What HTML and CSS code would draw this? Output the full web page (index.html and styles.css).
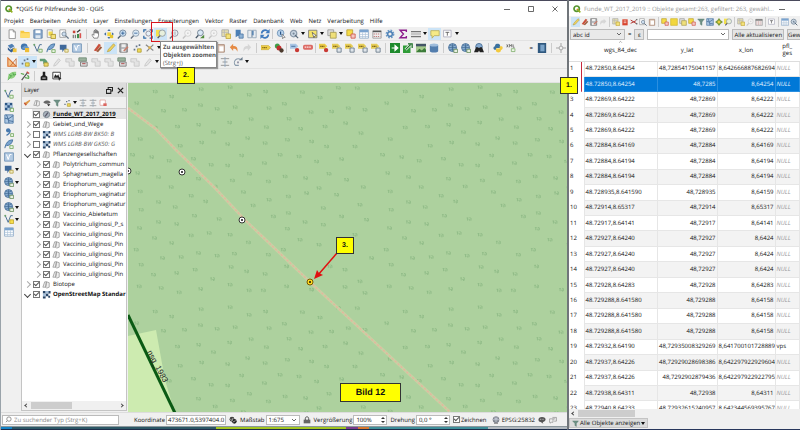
FILE: index.html
```html
<!DOCTYPE html>
<html lang="de">
<head>
<meta charset="utf-8">
<title>QGIS für Pilzfreunde 30 - QGIS</title>
<link rel="stylesheet" href="styles.css">
</head>
<body>
<svg class="defs" aria-hidden="true">
  <symbol id="q" viewBox="0 0 12 12"><circle cx="5.5" cy="5.5" r="4" fill="none" stroke="#589632" stroke-width="2.6"/><path d="M6 6l5 5" stroke="#93b023" stroke-width="2.4"/><path d="M5.5 5.500l2.500.5-2 2z" fill="#ee7913"/></symbol>
  <symbol id="new" viewBox="0 0 12 12"><path d="M2.500 1h5l2.500 2.500v8H2.500z" fill="#fff" stroke="#888"/><path d="M7.500 1v2.500H10" fill="none" stroke="#888"/></symbol>
  <symbol id="open" viewBox="0 0 12 12"><path d="M.5 2h4l1 1.500h6V10.500H.5z" fill="#f5c842"/><path d="M.5 5h11v5.500H.5z" fill="#ffdc6b"/></symbol>
  <symbol id="save" viewBox="0 0 12 12"><path d="M1 1h10v10H1z" fill="#8aa9cc" stroke="#5d7ea6"/><path d="M3 1.500h6v3.500H3z" fill="#fff"/><path d="M3 7.500h6V11H3z" fill="#dce6f0"/></symbol>
  <symbol id="lay" viewBox="0 0 12 12"><path d="M1.500 1h6v9h-6z" fill="#fff" stroke="#999"/><path d="M3 3h5v5H3z" fill="#f1d94d"/><path d="M6 6.500h5.500V11.500H6z" fill="#f6e37a" stroke="#a8922e"/></symbol>
  <symbol id="pages" viewBox="0 0 12 12"><path d="M1 1h7v9H1z" fill="#fff" stroke="#999"/><circle cx="6" cy="6" r="2.500" fill="#cde" stroke="#789"/><path d="M8 8l3.500 3.500" stroke="#678" stroke-width="1.500"/></symbol>
  <symbol id="style" viewBox="0 0 12 12"><path d="M1 2h3v3H1z" fill="#c8453b"/><path d="M6 4l4-3" stroke="#333" stroke-width="1.500"/><path d="M1.500 7v4M4 7v4" stroke="#444"/><path d="M6 6h2.500v5H6z" fill="#3f8f4a"/><path d="M9 5h2v6H9z" fill="#d9534f"/></symbol>
  <symbol id="hand" viewBox="0 0 12 12"><path d="M3.500 11C2 8.500.5 7 1.500 6.500s2 1 2 1V2.500c0-1 1.300-1 1.300 0V5 1.500c0-1 1.400-1 1.400 0V5 2c0-1 1.400-1 1.400 0v3.300V3.500c0-1 1.400-1 1.400 0V8L8 11z" fill="#fff" stroke="#555" stroke-width=".8"/></symbol>
  <symbol id="pan" viewBox="0 0 12 12"><path d="M4 4h4.500v4.500H4z" fill="#f3d53a"/><path d="M6 0l2 2.500H4zM6 12l2-2.500H4zM0 6l2.500-2v4zM12 6L9.500 4v4z" fill="#466f9f"/><path d="M7 7h4v4H7z" fill="#e4c531"/></symbol>
  <symbol id="zin" viewBox="0 0 12 12"><circle cx="7" cy="5" r="3.800" fill="#c9dff2" stroke="#6d8196"/><path d="M4.200 8L1 11.300" stroke="#4b5c6e" stroke-width="1.600"/><path d="M5 5h4M7 3v4" stroke="#2c5b94"/></symbol>
  <symbol id="zout" viewBox="0 0 12 12"><circle cx="7" cy="5" r="3.800" fill="#dceaf5" stroke="#8796a6"/><path d="M4.200 8L1 11.300" stroke="#65717e" stroke-width="1.600"/><path d="M5 5h4" stroke="#2c5b94"/></symbol>
  <symbol id="zfull" viewBox="0 0 12 12"><circle cx="6.500" cy="5.500" r="3" fill="#e6f0f8" stroke="#889"/><path d="M1 4V1h3M8 1h3v3M11 8v3H8M4 11H1V8" fill="none" stroke="#2c6aa8" stroke-width="1.500"/></symbol>
  <symbol id="zsel" viewBox="0 0 12 12"><path d="M0 1h6v8H0z" fill="#f4e04c"/><circle cx="7.500" cy="5" r="3.800" fill="#e8f0dc" stroke="#8b96a0"/><path d="M4.700 8L2 11" stroke="#556" stroke-width="1.600"/></symbol>
  <symbol id="zlay" viewBox="0 0 12 12"><circle cx="7" cy="5" r="3.800" fill="#eef2f5" stroke="#889"/><path d="M4.200 8L1 11.300" stroke="#667" stroke-width="1.600"/><path d="M5.500 3h3v4h-3z" fill="#c5ccd2"/></symbol>
  <symbol id="znat" viewBox="0 0 12 12"><circle cx="7" cy="5" r="3.800" fill="#f3f3f3" stroke="#ccc"/><path d="M4.200 8L1 11.300" stroke="#c4c4c4" stroke-width="1.600"/><path d="M6 5h2" stroke="#bbb"/></symbol>
  <symbol id="zlast" viewBox="0 0 12 12"><circle cx="6.500" cy="4.500" r="3.500" fill="#d9e8f5" stroke="#667788"/><path d="M4 7.500L1 11" stroke="#456" stroke-width="1.600"/><path d="M11 7v4H6z" fill="#4f8a3a"/></symbol>
  <symbol id="nmap" viewBox="0 0 12 12"><path d="M1 1h8v8H1z" fill="#e8e1b0" stroke="#a9a9a9"/><path d="M1 4h8M4 1v8" stroke="#b7b7b7"/><path d="M6 6h5.500v5.500H6z" fill="#f3e27a" stroke="#bfa53c"/></symbol>
  <symbol id="bm" viewBox="0 0 12 12"><path d="M2 1h6v9L5 8l-3 2z" fill="#4b7fb5"/><path d="M6 6h5v5H6z" fill="#8fb3d6" stroke="#4f79a5"/></symbol>
  <symbol id="book" viewBox="0 0 12 12"><path d="M1 1.500h4.500v9H1zM6.500 1.500H11v9H6.500z" fill="#e7ecf1" stroke="#92a3b5"/><path d="M6 2h2v6L7 7 6 8z" fill="#5d87b3"/></symbol>
  <symbol id="ref" viewBox="0 0 12 12"><path d="M2 5.500A4.200 4.200 0 019.500 3M10 6.500A4.200 4.200 0 012.500 9" fill="none" stroke="#3f79bd" stroke-width="2"/><path d="M11.500 0v5h-5zM.5 12V7h5z" fill="#3f79bd"/></symbol>
  <symbol id="ident" viewBox="0 0 12 12"><circle cx="5.500" cy="5" r="4" fill="#b9d3ec" stroke="#6e91b5"/><path d="M5.500 3v4" stroke="#2a5588" stroke-width="1.400"/><path d="M7 6l4 4-2 .2-1 1.500z" fill="#fff" stroke="#555" stroke-width=".7"/></symbol>
  <symbol id="gear" viewBox="0 0 12 12"><circle cx="6" cy="6" r="4.200" fill="none" stroke="#6f9cc8" stroke-width="2.200" stroke-dasharray="2 1.300"/><circle cx="6" cy="6" r="2.800" fill="none" stroke="#4f82b6" stroke-width="1.800"/></symbol>
  <symbol id="act" viewBox="0 0 12 12"><circle cx="5.500" cy="5.500" r="3.800" fill="#cbd7e3" stroke="#8a99a9" stroke-width="1.500"/><circle cx="5.500" cy="5.500" r="1.300" fill="#789"/><path d="M7 7l4 4" stroke="#567" stroke-width="1.400"/></symbol>
  <symbol id="sel" viewBox="0 0 12 12"><path d="M.7 1.500h10v9H.7z" fill="#f5e36a" stroke="#777"/><path d="M5 4l5 4-2 .4-1 2z" fill="#fff" stroke="#444" stroke-width=".8"/></symbol>
  <symbol id="sel2" viewBox="0 0 12 12"><path d="M1 1h7v7H1z" fill="#ddd" stroke="#999"/><path d="M4 4h7v7H4z" fill="#f0e07a" stroke="#a69a50"/></symbol>
  <symbol id="desel" viewBox="0 0 12 12"><path d="M1 1h7v7H1z" fill="#f5dc48" stroke="#baa02c"/><path d="M6 6h5v5H6z" fill="#f4c9c4" stroke="#d05548"/></symbol>
  <symbol id="tab" viewBox="0 0 12 12"><path d="M.7 1h10.600v10H.7z" fill="#fff" stroke="#8ca8c6"/><path d="M1 1h10v3H1z" fill="#7aa3cf"/><path d="M1 6.500h10M1 9h10M4.300 4v7M7.700 4v7" stroke="#a9bfd6" stroke-width=".8"/></symbol>
  <symbol id="calc" viewBox="0 0 12 12"><path d="M1 2h10v9H1z" fill="#eee" stroke="#999"/><path d="M1 3h10" stroke="#555" stroke-width="1.600"/><path d="M2 6h8M2 9h8" stroke="#b66" stroke-dasharray="1.500 1"/></symbol>
  <symbol id="sum" viewBox="0 0 12 12"><path d="M10 3.500V1.500H2.500L6.500 6l-4 4.500H10V8.500" fill="none" stroke="#8c1d8c" stroke-width="1.700"/></symbol>
  <symbol id="rul" viewBox="0 0 12 12"><path d="M0 3h12M0 9h12" stroke="#777" stroke-width="1.500"/><path d="M0 4.500h12v3H0z" fill="#c8c8c8"/></symbol>
  <symbol id="tip" viewBox="0 0 12 12"><path d="M1 2h10v6H5l-2.500 3V8H1z" fill="#f6ea86" stroke="#b8ad5a"/></symbol>
  <symbol id="txt" viewBox="0 0 12 12"><path d="M.7 1.500h9v8h-9z" fill="#fff" stroke="#aab"/><path d="M3 4h4.500M5.200 4v4" stroke="#555"/></symbol>
  <symbol id="db" viewBox="0 0 12 12"><path d="M1 3l5-2 3 3-5 3z" fill="#4f7fb4"/><path d="M1 5l3 3 5-3v4l-4 2.500L1 8z" fill="#345f93"/><path d="M7 6.500h4.500V11H7z" fill="#f0c33d"/></symbol>
  <symbol id="pkg" viewBox="0 0 12 12"><circle cx="5" cy="4.500" r="4" fill="#3f74ad"/><path d="M2 6l4-3 5 2-4 4z" fill="#6997c7"/><path d="M6 6h5v5H6z" fill="#eebd36"/></symbol>
  <symbol id="v" viewBox="0 0 12 12"><path d="M1.500 2l3.500 8 3-8h2.500" fill="none" stroke="#4f7396" stroke-width="1.200"/><circle cx="1.500" cy="2" r="1.200" fill="#6ca36c"/><path d="M7 7.500h4V11H7z" fill="#e9f5e3" stroke="#71a65c"/></symbol>
  <symbol id="vy" viewBox="0 0 12 12"><path d="M1.500 2l3.500 8 3-8h2.500" fill="none" stroke="#4f7396" stroke-width="1.200"/><circle cx="1.500" cy="2" r="1.200" fill="#6ca36c"/><path d="M7 7h4.500v4.500H7z" fill="#f6de4c" stroke="#c0a52e"/></symbol>
  <symbol id="fea" viewBox="0 0 12 12"><path d="M1 11C2 5 5 1 10.500 1 10 5 7 8 3 8" fill="#7aa5d0" stroke="#3f6c9b"/><path d="M7 8h4v3.500H7z" fill="#e9f5e3" stroke="#71a65c"/></symbol>
  <symbol id="blk" viewBox="0 0 12 12"><path d="M1 2h8v6H6l-2 3V8H1z" fill="#40699a"/><path d="M7 7.500h4V11H7z" fill="#f3eec2" stroke="#b9a34b"/></symbol>
  <symbol id="vv" viewBox="0 0 12 12"><path d="M.7 1h10.600v10H.7z" fill="#b4cbe3" stroke="#6c8fb3"/><path d="M3 3l2 6 2-6h2" fill="none" stroke="#fff" stroke-width="1.200"/></symbol>
  <symbol id="mesh" viewBox="0 0 12 12"><path d="M1 1h10v10H1z" fill="#aac6e2" stroke="#4e78a5"/><path d="M1 5l4 1 6-4M5 6l1 5M5 6L3 1M6 8l5 1" stroke="#3c6591" fill="none"/></symbol>
  <symbol id="chk" viewBox="0 0 12 12"><path d="M1 1h9v9H1z" fill="#2b5584"/><path d="M4 1h3v3H4zM1 4h3v3H1zM7 4h3v3H7zM4 7h3v3H4z" fill="#a9c3df"/><path d="M7.500 7.500h4v4h-4z" fill="#ecf6e6" stroke="#71a65c"/></symbol>
  <symbol id="comma" viewBox="0 0 12 12"><circle cx="5" cy="4" r="2.600" fill="#4779ae"/><path d="M7.500 4C7.500 7 6 8.500 3 10" fill="none" stroke="#4779ae" stroke-width="1.500"/><path d="M8 8h3.500v3.500H8z" fill="#ecf6e6" stroke="#71a65c"/></symbol>
  <symbol id="glb" viewBox="0 0 12 12"><circle cx="5.500" cy="5.500" r="4.800" fill="#8fb2d6" stroke="#3f6791"/><path d="M5.500 1v9M1 5.500h9M2.500 2.500c2 1.500 4 1.500 6 0M2.500 8.500c2-1.500 4-1.500 6 0" fill="none" stroke="#345d88" stroke-width=".8"/><path d="M7 7.500h4.500v4H7z" fill="#e7efe0" stroke="#698d5c"/></symbol>
  <symbol id="bino" viewBox="0 0 12 12"><circle cx="6" cy="4.500" r="4" fill="#87abd1" stroke="#456b94"/><path d="M2.500 5h2.500l.5 1h1L7 5h2.500L12 11H7L6 9 5 11H0z" fill="#222"/></symbol>
  <symbol id="pens" viewBox="0 0 12 12"><path d="M1 9L7 1l2.500 1.500L4 10z" fill="#c9503c"/><path d="M4 10L9 4l2 1.500-5 5.500z" fill="#9c5b3c"/></symbol>
  <symbol id="pen" viewBox="0 0 12 12"><path d="M1.500 10.500L3 7.500 9 1l2 1.800-6 6.700z" fill="#f0d25c" stroke="#a9923b" stroke-width=".7"/></symbol>
  <symbol id="savee" viewBox="0 0 12 12"><path d="M1 1h9v10H1z" fill="#a9abaf" stroke="#777"/><path d="M3 1.500h5V5H3zM3 7h5v3.500H3z" fill="#eee"/><path d="M5 9l5-5 1.500 1.200-5 5z" fill="#c97c6a"/></symbol>
  <symbol id="dots" viewBox="0 0 12 12"><path d="M2 7h2v2H2zM4.500 3h2v2h-2zM8 1.500h2v2H8z" fill="#64748a"/><path d="M6.500 7H11v4H6.500z" fill="#f1dc5a" stroke="#b09c36"/></symbol>
  <symbol id="vtx" viewBox="0 0 12 12"><path d="M1 2l9 7M10 2L2 10" stroke="#888" stroke-width="1.400"/><path d="M4 4h3v3H4z" fill="#ddb04d"/></symbol>
  <symbol id="paste" viewBox="0 0 12 12"><path d="M2 2h8v9H2z" fill="#ddc6b6" stroke="#a2806b"/><path d="M4 4h5v6H4z" fill="#fff"/></symbol>
  <symbol id="undo" viewBox="0 0 12 12"><path d="M1 5l4-4v2.500c4 0 6 2 5 7-1-3-2-3.500-5-3.500V9.500z" fill="#e58b45"/></symbol>
  <symbol id="redo" viewBox="0 0 12 12"><path d="M11 5L7 1v2.500c-4 0-6 2-5 7 1-3 2-3.500 5-3.500V9.500z" fill="#d6d6d6"/></symbol>
  <symbol id="lab" viewBox="0 0 12 12"><path d="M0 3h9l2.500 2.500L9 8H0z" fill="#efcf48" stroke="#c3a12c" stroke-width=".6"/><path d="M1.500 5.500h6" stroke="#856a16" stroke-width="1.500" stroke-dasharray="1.500 .5"/></symbol>
  <symbol id="labp" viewBox="0 0 12 12"><path d="M0 1h7l3 3-3 3H0z" fill="#ebcb47"/><path d="M1.500 4h5" stroke="#7c6419" stroke-width="1.400" stroke-dasharray="1.500 .5"/><circle cx="8.500" cy="8.500" r="2.600" fill="#c83a34"/></symbol>
  <symbol id="labs" viewBox="0 0 12 12"><path d="M0 1h7l3 3-3 3H0z" fill="#e6cd58"/><path d="M1.500 4h5" stroke="#7c6419" stroke-width="1.400" stroke-dasharray="1.500 .5"/><path d="M6 6h5v5H6z" fill="#dfe5eb" stroke="#667788"/></symbol>
  <symbol id="pie" viewBox="0 0 12 12"><circle cx="4" cy="3.500" r="3" fill="#3f9f49"/><circle cx="6" cy="6" r="3" fill="#c22f2d"/><circle cx="9" cy="9" r="2.600" fill="#4c3a2d"/></symbol>
  <symbol id="labb" viewBox="0 0 12 12"><path d="M0 1h7l3 3-3 3H0z" fill="#a9c5e4"/><path d="M1.500 4h5" stroke="#557ca8" stroke-width="1.300"/><circle cx="8.500" cy="8.500" r="2.600" fill="#c83a34"/></symbol>
  <symbol id="labr" viewBox="0 0 12 12"><rect y="2" width="12" height="6" rx="2" fill="#dc6a64"/><path d="M2 5h8" stroke="#fbe3e1" stroke-width="1.400" stroke-dasharray="2 .7"/></symbol>
  <symbol id="garr" viewBox="0 0 12 12"><path d="M0 0h12v12H0z" fill="#1d8a2c"/><path d="M2 6h5M6 3l3.500 3L6 9z" fill="#fff" stroke="#fff" stroke-width="1.300"/></symbol>
  <symbol id="gexp" viewBox="0 0 12 12"><path d="M0 3h9v9H0z" fill="#2f9c38"/><path d="M3 8l5-5" stroke="#fff" stroke-width="3"/><path d="M3 8l6-6M6 1h5v5" stroke="#1b6e25" stroke-width="1.500" fill="none"/></symbol>
  <symbol id="img" viewBox="0 0 12 12"><path d="M0 1h12v10H0z" fill="#a5c88b"/><path d="M0 1h12v3H0z" fill="#456"/><path d="M0 11l4-4 3 2 3-3 2 2v3z" fill="#3c7c3a"/></symbol>
  <symbol id="cyl" viewBox="0 0 12 12"><path d="M1 2.500v7c0 2.500 10 2.500 10 0v-7z" fill="#537eae"/><ellipse cx="6" cy="2.500" rx="5" ry="1.800" fill="#9fbcdb"/></symbol>
  <symbol id="py" viewBox="0 0 12 12"><path d="M2.500 3c0-3 6-3 6 0v3H4v2H2C0 8 0 4 2.500 4z" fill="#3b719f"/><path d="M9.500 9c0 3-6 3-6 0V6.500H8V4h2c2.500 0 2 4-.5 4.500z" fill="#f3c93e"/></symbol>
  <symbol id="xml" viewBox="0 0 14 12"><path d="M1 1l2 4M3 1L1 5M5 5V1l1.500 2L8 1v4M10 1v4h2" fill="none" stroke="#555"/><path d="M7.500 7h5v4h-5z" fill="#eef6e9" stroke="#71a65c"/></symbol>
  <symbol id="note" viewBox="0 0 12 12"><path d="M1 0h10v12H1z" fill="#2f587f"/><path d="M4 2h5v8H4z" fill="#7aa3c9"/></symbol>
  <symbol id="cross" viewBox="0 0 12 12"><circle cx="6" cy="6" r="2.300" fill="none" stroke="#999"/><path d="M6 0v3.500M6 8.500V12M0 6h3.500M8.500 6H12" stroke="#999"/></symbol>
  <symbol id="tri" viewBox="0 0 12 12"><path d="M1 1v10h10z" fill="#f3c48c" stroke="#db7230" stroke-width="1.300"/><path d="M4 11L11 2v9" fill="none" stroke="#c46a34"/></symbol>
  <symbol id="shg" viewBox="0 0 12 12"><path d="M1 2h6l3 3v3H5V5H1z" fill="#5f9d75"/><path d="M6 7h5v4H6z" fill="#f0dc69" stroke="#a8983b"/></symbol>
  <symbol id="shx" viewBox="0 0 12 12"><path d="M1 2h7v3h3v6H5V6H1z" fill="#e3e3e3" stroke="#c6c6c6"/></symbol>
  <symbol id="clip" viewBox="0 0 12 12"><path d="M3 8l5-6 2 2-5 6-3 1z" fill="#e3e3e3" stroke="#c6c6c6"/></symbol>
  <symbol id="shr" viewBox="0 0 12 12"><path d="M1 1h9v4H1z" fill="#9bb29d" stroke="#6e8a73"/><path d="M3 6h8v5H3z" fill="#ddd" stroke="#777"/><path d="M5 8h4" stroke="#a33"/></symbol>
  <symbol id="alg" viewBox="0 0 12 12"><path d="M1 2h10M3 6h6M1 10h10" stroke="#888"/><path d="M6 0v12" stroke="#8ba6c0"/></symbol>
  <symbol id="rot" viewBox="0 0 12 12"><path d="M9.500 3.500A4.300 4.300 0 103 10h4" fill="none" stroke="#8a9bab" stroke-width="1.300"/><path d="M7 4h4.500V0z" fill="#6e7f8f"/><circle cx="6" cy="6.500" r="1.300" fill="#99a"/></symbol>
  <symbol id="leaf" viewBox="0 0 12 12"><path d="M1 10C1 3 5 1 11 1c0 6-3 9-8 8" fill="#8fd07f"/><path d="M1 11l5-6M7 2l1 3 3-1M2 4l3 2" stroke="#4ca348" fill="none"/></symbol>
  <symbol id="wand" viewBox="0 0 12 12"><path d="M2 11L9 2" stroke="#555" stroke-width="1.500"/><path d="M1 3l4 1M6 8l5 1M9 5l2 3" stroke="#58a74d" stroke-width="1.500"/><path d="M8 1l3 2" stroke="#c94b40" stroke-width="1.600"/></symbol>
  <symbol id="stamp" viewBox="0 0 12 12"><path d="M4.500 1h3v4L10 7v4H2V7l2.500-2z" fill="#222"/><path d="M4 8.500h4" stroke="#fff"/></symbol>
  <symbol id="imgs" viewBox="0 0 12 12"><path d="M1 1.500h9v8H1z" fill="#fff" stroke="#222"/><path d="M2 8l2-4 2 2 1.500-2L9 8z" fill="#222"/><path d="M7 6l4.500 3.500L9.500 10 8.500 12z" fill="#222"/></symbol>
  <symbol id="lyr" viewBox="0 0 10 10"><path d="M1 8l2-6h2L4 8zM4 8l1-6 3 1v5L5 9z" fill="#eee" stroke="#999" stroke-width=".9"/></symbol>
  <symbol id="dotl" viewBox="0 0 10 10"><circle cx="5" cy="5" r="3.500" fill="#aab3bd" stroke="#75808b"/><path d="M3.500 7l3-4" stroke="#556" stroke-width="1.300"/></symbol>
  <symbol id="wms" viewBox="0 0 10 10"><path d="M1 1h3v3H1zM4 4h3v3H4zM7 1h2.500v3H7zM1 7h3v2.500H1zM7 6.500h2v2H7z" fill="#2a4668"/><path d="M4 1h3v3H4zM1 4h3v3H1z" fill="#a7c1dc"/></symbol>
  <symbol id="fil" viewBox="0 0 12 12"><path d="M1 1.500h10L7.500 6v5L5 9.500V6z" fill="#6f9185" stroke="#52766a" stroke-width=".6"/></symbol>
  <symbol id="eye" viewBox="0 0 12 12"><path d="M.5 5C3 1.500 9 1.500 11.500 5 9 8 3 8 .5 5z" fill="#666"/><path d="M6 8l5 0-2.500 3z" fill="#222"/></symbol>
  <symbol id="brush" viewBox="0 0 12 12"><path d="M1 6l3-1 6-4 1 1.500L6 8l-2 2z" fill="#dd9a4a"/><path d="M2 6l3 3" stroke="#c3503a" stroke-width="1.600"/></symbol>
  <symbol id="rem" viewBox="0 0 12 12"><path d="M1.500 1.500h8v8h-8z" fill="#fff" stroke="#d49490"/><path d="M6.500 6.500h5v4h-5z" fill="#dc6660"/></symbol>
  <symbol id="sci" viewBox="0 0 12 12"><path d="M1 3l8 5M1 8l8-4" stroke="#b33b35" stroke-width="1.500"/><path d="M9 3l2-1M9 8l2 1.500" stroke="#666" stroke-width="2"/></symbol>
  <symbol id="del" viewBox="0 0 12 12"><path d="M2 2h8v9H2z" fill="#d8442e"/><path d="M4 4.500h4M4 7h4" stroke="#fff"/></symbol>
  <symbol id="star" viewBox="0 0 12 12"><path d="M6 0l2.500 3.500L12 6 8.500 8.500 6 12 3.500 8.500 0 6l3.500-2.500z" fill="#77983a"/><path d="M4 4h4v4H4z" fill="#e9cf3e"/></symbol>
  <symbol id="ysq" viewBox="0 0 12 12"><path d="M1 1h10v10H1z" fill="#f2d73e" stroke="#cfb52d"/></symbol>
  <symbol id="lock" viewBox="0 0 12 12"><path d="M3.500 6V3.500c0-3 5-3 5 0V6" fill="none" stroke="#555" stroke-width="1.500"/><path d="M1 5.500h10V11H1z" fill="#666"/></symbol>
  <symbol id="ext" viewBox="0 0 12 12"><circle cx="4.500" cy="5" r="3.700" fill="#444"/><circle cx="8" cy="8" r="3.500" fill="#222"/><path d="M2 5l3 2 1-4M6 9l4-2" stroke="#ddd" fill="none"/></symbol>
  <symbol id="msg" viewBox="0 0 12 12"><path d="M6 1.500c7 0 7 7 1 7.500l1 2.500L4 9C-1 8-.5 1.500 6 1.500z" fill="#555"/><path d="M3 5h6" stroke="#ddd" stroke-dasharray="1.500 1"/></symbol>
  <symbol id="chat" viewBox="0 0 14 12"><path d="M1 4h6v6H4l-2 1.500V10H1zM6 1.500h7V8h-4" fill="none" stroke="#777"/><path d="M7 4h4" stroke="#777"/></symbol>
  <symbol id="epsg" viewBox="0 0 12 12"><circle cx="6" cy="5.500" r="4.500" fill="#8b949a" stroke="#667"/><path d="M1.500 5.500h9M6 1v9M3 2.500c2 2 4 2 6 0" stroke="#dde" fill="none" stroke-width=".8"/><path d="M3 11h6" stroke="#555"/></symbol>
</svg>

<main class="desktop">
<section class="win qgis">
  <header class="title"><svg class="logo"><use href="#q"/></svg><h1>*QGIS für Pilzfreunde 30 - QGIS</h1>
    <span class="ctl"><button aria-label="Minimieren"><svg viewBox="0 0 8 8"><path d="M1 4.500h6"/></svg></button><button aria-label="Maximieren"><svg viewBox="0 0 8 8"><path d="M1.500 1.500h5v5h-5z"/></svg></button><button aria-label="Schließen"><svg viewBox="0 0 8 8"><path d="M1.500 1.500l5 5M6.500 1.500l-5 5"/></svg></button></span>
  </header>
  <nav class="menu"><a href="#">Projekt</a><a href="#">Bearbeiten</a><a href="#">Ansicht</a><a href="#">Layer</a><a href="#">Einstellungen</a><a href="#">Erweiterungen</a><a href="#">Vektor</a><a href="#">Raster</a><a href="#">Datenbank</a><a href="#">Web</a><a href="#">Netz</a><a href="#">Verarbeitung</a><a href="#">Hilfe</a></nav>

  <div class="bar">
    <button aria-label="Neues Projekt"><svg><use href="#new"/></svg></button><button aria-label="Öffnen"><svg><use href="#open"/></svg></button><button aria-label="Speichern"><svg><use href="#save"/></svg></button><button aria-label="Neues Layout"><svg><use href="#lay"/></svg></button><button aria-label="Layouts"><svg><use href="#pages"/></svg></button><button aria-label="Stil"><svg><use href="#style"/></svg></button>
    <i class="sep"></i>
    <button aria-label="Verschieben"><svg><use href="#hand"/></svg></button><button aria-label="Zur Auswahl"><svg><use href="#pan"/></svg></button><button aria-label="Hineinzoomen"><svg><use href="#zin"/></svg></button><button aria-label="Herauszoomen"><svg><use href="#zout"/></svg></button><button aria-label="Volle Ausdehnung"><svg><use href="#zfull"/></svg></button><button class="on" aria-label="Zu ausgewählten Objekten zoomen"><svg><use href="#zsel"/></svg></button><button aria-label="Auf Layer zoomen"><svg><use href="#zlay"/></svg></button><button aria-label="Native Auflösung"><svg><use href="#znat"/></svg></button><button aria-label="Zoom zurück"><svg><use href="#zlast"/></svg></button><button aria-label="Zoom vor"><svg><use href="#znat"/></svg></button><button aria-label="Neue Karte"><svg><use href="#nmap"/></svg></button><button aria-label="Lesezeichen neu"><svg><use href="#bm"/></svg></button><button aria-label="Lesezeichen"><svg><use href="#book"/></svg></button><button aria-label="Aktualisieren"><svg><use href="#ref"/></svg></button>
    <i class="sep thin"></i>
    <button aria-label="Abfragen"><svg><use href="#ident"/></svg></button><button aria-label="Aktion"><svg><use href="#act"/></svg></button><i class="dd"></i><button aria-label="Auswählen"><svg><use href="#sel"/></svg></button><i class="dd"></i><button aria-label="Nach Wert wählen"><svg><use href="#sel2"/></svg></button><i class="dd"></i><button aria-label="Auswahl aufheben"><svg><use href="#desel"/></svg></button><button aria-label="Attributtabelle"><svg><use href="#tab"/></svg></button><button aria-label="Feldrechner"><svg><use href="#calc"/></svg></button><button aria-label="Werkzeugkiste"><svg><use href="#gear"/></svg></button><button aria-label="Statistik"><svg><use href="#sum"/></svg></button><button aria-label="Messen"><svg><use href="#rul"/></svg></button><i class="dd"></i><button class="on" aria-label="Kartenhinweise"><svg><use href="#tip"/></svg></button><button aria-label="Textanmerkung"><svg><use href="#txt"/></svg></button><i class="dd"></i>
  </div>

  <div class="bar">
    <button aria-label="Datenquellen"><svg><use href="#db"/></svg></button><button aria-label="Geopackage"><svg><use href="#pkg"/></svg></button><button aria-label="Shapedatei"><svg><use href="#v"/></svg></button><button aria-label="Spatialite"><svg><use href="#fea"/></svg></button><button aria-label="Temporärlayer"><svg><use href="#blk"/></svg></button><button aria-label="Virtueller Layer"><svg><use href="#vv"/></svg></button>
    <i class="sep wide"></i>
    <button aria-label="Bearbeitungsstatus"><svg><use href="#pens"/></svg></button><button class="on" aria-label="Bearbeiten"><svg><use href="#pen"/></svg></button><button aria-label="Änderungen speichern"><svg><use href="#savee"/></svg></button><button aria-label="Punkt hinzufügen"><svg><use href="#dots"/></svg></button><button aria-label="Knoten"><svg><use href="#vtx"/></svg></button><i class="dd"></i><button aria-label="Attribute ändern"><svg><use href="#calc"/></svg></button><button aria-label="Löschen"><svg><use href="#del"/></svg></button><button aria-label="Ausschneiden"><svg><use href="#sci"/></svg></button><button aria-label="Kopieren"><svg><use href="#pages"/></svg></button><button aria-label="Einfügen"><svg><use href="#paste"/></svg></button><button aria-label="Rückgängig"><svg><use href="#undo"/></svg></button><button aria-label="Wiederholen"><svg><use href="#redo"/></svg></button>
    <i class="sep"></i>
    <button aria-label="Beschriftung"><svg><use href="#lab"/></svg></button><button aria-label="Diagramm"><svg><use href="#pie"/></svg></button><i class="sep thin"></i><button aria-label="Fixierte hervorheben"><svg><use href="#labb"/></svg></button><button aria-label="Nicht platzierte"><svg><use href="#labr"/></svg></button><i class="sep thin"></i><button aria-label="Fixieren"><svg><use href="#labp"/></svg></button><button aria-label="Anzeigen"><svg><use href="#labs"/></svg></button><button aria-label="Beschriftung verschieben"><svg><use href="#labs"/></svg></button><button aria-label="Beschriftung drehen"><svg><use href="#labs"/></svg></button><button aria-label="Beschriftung ändern"><svg><use href="#labs"/></svg></button>
    <i class="sep"></i>
    <button aria-label="Import"><svg><use href="#garr"/></svg></button><button aria-label="Export"><svg><use href="#gexp"/></svg></button><button aria-label="Bild"><svg><use href="#img"/></svg></button><button aria-label="Datenbank"><svg><use href="#cyl"/></svg></button><i class="sep"></i><button aria-label="Metasuche"><svg><use href="#glb"/></svg></button><button aria-label="Kartendienst"><svg><use href="#glb"/></svg></button><button aria-label="Dienstsuche"><svg><use href="#bino"/></svg></button><i class="sep"></i><button aria-label="Python"><svg><use href="#py"/></svg></button><button aria-label="KML"><svg><use href="#xml"/></svg></button><i class="more">=</i><button aria-label="Hilfe"><svg><use href="#note"/></svg></button><i class="sep"></i><button aria-label="Zentrieren"><svg><use href="#cross"/></svg></button>
  </div>

  <div class="bar">
    <button aria-label="Erweiterte Digitalisierung"><svg><use href="#tri"/></svg></button><button class="on" aria-label="Objekt verschieben"><svg><use href="#dots"/></svg></button><i class="dd on"></i><button aria-label="Objekt kopieren"><svg><use href="#shg"/></svg></button><button disabled aria-label="Vereinfachen"><svg><use href="#clip"/></svg></button><button disabled aria-label="Ring"><svg><use href="#shx"/></svg></button><button aria-label="Teil"><svg><use href="#shr"/></svg></button><button disabled aria-label="Ring füllen"><svg><use href="#shx"/></svg></button><button disabled aria-label="Ring löschen"><svg><use href="#shx"/></svg></button><button aria-label="Teil löschen"><svg><use href="#shr"/></svg></button><button disabled aria-label="Umformen"><svg><use href="#shx"/></svg></button><button disabled aria-label="Linie versetzen"><svg><use href="#clip"/></svg></button><i class="dd"></i><button disabled aria-label="Trennen"><svg><use href="#shx"/></svg></button><button disabled aria-label="Teile trennen"><svg><use href="#shx"/></svg></button><button disabled aria-label="Verschmelzen"><svg><use href="#shx"/></svg></button><button disabled aria-label="Attribute verschmelzen"><svg><use href="#shx"/></svg></button><i class="sep"></i><button aria-label="Ausrichten"><svg><use href="#alg"/></svg></button><button aria-label="Punktsymbole drehen"><svg><use href="#rot"/></svg></button><i class="dd"></i>
  </div>

  <div class="bar">
    <button aria-label="Grass öffnen"><svg><use href="#leaf"/></svg></button><button aria-label="Grass bearbeiten"><svg><use href="#wand"/></svg></button><i class="sep"></i><button aria-label="Stempel"><svg><use href="#stamp"/></svg></button><button aria-label="Bildauswahl"><svg><use href="#imgs"/></svg></button>
  </div>

  <div class="work">
    <div class="side">
      <button aria-label="Vektorlayer"><svg><use href="#v"/></svg></button><button aria-label="Rasterlayer"><svg><use href="#chk"/></svg></button><button aria-label="Netzlayer"><svg><use href="#mesh"/></svg></button><button aria-label="Textdatei"><svg><use href="#comma"/></svg></button><button aria-label="Spatialite-Layer"><svg><use href="#fea"/></svg></button><button aria-label="Virtueller Layer"><svg><use href="#vv"/></svg></button><button class="more-dd" aria-label="PostGIS"><svg><use href="#blk"/></svg></button><button class="more-dd" aria-label="WMS"><svg><use href="#glb"/></svg></button><button aria-label="WCS"><svg><use href="#glb"/></svg></button><button class="more-dd" aria-label="WFS"><svg><use href="#glb"/></svg></button><button class="more-dd" aria-label="Neuer Layer"><svg><use href="#vy"/></svg></button><button aria-label="Tabelle"><svg><use href="#tab"/></svg></button>
    </div>
    <aside class="panel">
      <header><h2>Layer</h2><button aria-label="Abdocken"><svg viewBox="0 0 8 8"><path d="M2.500 2.500v-2h5v4h-2M.5 2.800h5v4.500h-5z" fill="none" stroke="#222" stroke-width="1.200"/></svg></button><button aria-label="Panel schließen"><svg viewBox="0 0 8 8"><path d="M1 1l6 6M7 1L1 7" stroke="#222" stroke-width="1.500"/></svg></button></header>
      <div class="tools"><button aria-label="Gestaltung"><svg><use href="#brush"/></svg></button><button aria-label="Gruppe"><svg><use href="#lyr"/></svg></button><button aria-label="Themen"><svg><use href="#eye"/></svg></button><button aria-label="Filtern"><svg><use href="#fil"/></svg></button><button aria-label="Ausdruck"><svg><use href="#dots"/></svg></button><i class="dd"></i><button aria-label="Ausklappen"><svg><use href="#alg"/></svg></button><button aria-label="Einklappen"><svg><use href="#alg"/></svg></button><button aria-label="Entfernen"><svg><use href="#rem"/></svg></button></div>
      <ul class="tree">
        <li class="cur"><i></i><label><input type="checkbox" checked><svg><use href="#dotl"/></svg><span>Funde_WT_2017_2019</span></label></li>
        <li><i class="c"></i><label><input type="checkbox" checked><svg><use href="#lyr"/></svg><span>Gebiet_und_Wege</span></label></li>
        <li class="it"><i class="c"></i><label><input type="checkbox"><svg><use href="#wms"/></svg><span>WMS LGRB-BW BK50: B</span></label></li>
        <li class="it"><i class="c"></i><label><input type="checkbox"><svg><use href="#wms"/></svg><span>WMS LGRB-BW GK50: G</span></label></li>
        <li><i class="o"></i><label><input type="checkbox" checked><svg><use href="#lyr"/></svg><span>Pflanzengesellschaften</span></label></li>
        <li class="sub"><i class="c"></i><label><input type="checkbox" checked><svg><use href="#lyr"/></svg><span>Polytrichum_commun</span></label></li>
        <li class="sub"><i class="c"></i><label><input type="checkbox" checked><svg><use href="#lyr"/></svg><span>Sphagnetum_magella</span></label></li>
        <li class="sub"><i class="c"></i><label><input type="checkbox" checked><svg><use href="#lyr"/></svg><span>Eriophorum_vaginatur</span></label></li>
        <li class="sub"><i class="c"></i><label><input type="checkbox" checked><svg><use href="#lyr"/></svg><span>Eriophorum_vaginatur</span></label></li>
        <li class="sub"><i class="c"></i><label><input type="checkbox" checked><svg><use href="#lyr"/></svg><span>Eriophorum_vaginatur</span></label></li>
        <li class="sub"><i class="c"></i><label><input type="checkbox" checked><svg><use href="#lyr"/></svg><span>Vaccinio_Abietetum</span></label></li>
        <li class="sub"><i class="c"></i><label><input type="checkbox" checked><svg><use href="#lyr"/></svg><span>Vaccinio_uliginosi_P_s</span></label></li>
        <li class="sub"><i class="c"></i><label><input type="checkbox" checked><svg><use href="#lyr"/></svg><span>Vaccinio_uliginosi_Pin</span></label></li>
        <li class="sub"><i class="c"></i><label><input type="checkbox" checked><svg><use href="#lyr"/></svg><span>Vaccinio_uliginosi_Pin</span></label></li>
        <li class="sub"><i class="c"></i><label><input type="checkbox" checked><svg><use href="#lyr"/></svg><span>Vaccinio_uliginosi_Pin</span></label></li>
        <li class="sub"><i class="c"></i><label><input type="checkbox" checked><svg><use href="#lyr"/></svg><span>Vaccinio_uliginosi_Pin</span></label></li>
        <li class="sub"><i class="c"></i><label><input type="checkbox" checked><svg><use href="#lyr"/></svg><span>Vaccinio_uliginosi_Pin</span></label></li>
        <li><i class="c"></i><label><input type="checkbox" checked><svg><use href="#lyr"/></svg><span>Biotope</span></label></li>
        <li class="b"><i class="o"></i><label><input type="checkbox" checked><svg><use href="#wms"/></svg><span>OpenStreetMap Standar</span></label></li>
      </ul>
      <div class="hscroll"><i class="l"></i><b></b><i class="r"></i></div>
    </aside>
    <div class="map">
      <svg class="canvas" role="img" aria-label="Karte">
        <defs>
          <marker id="tuft" viewBox="0 0 6 5" markerWidth="17" markerHeight="14" refX="3" refY="2.500" markerUnits="userSpaceOnUse"><path d="M.5 1.200h2M1.500 1v3M3.500.8l2 .7M4 2.200v2.300M5.300 1.500v2.500M2.500 3h1" stroke="#8dba85" stroke-width=".9" fill="none"/></marker>
          <pattern id="wood" width="250" height="220" patternUnits="userSpaceOnUse"><g transform="translate(-3 -3) scale(.333)"><polyline fill="none" marker-start="url(#tuft)" marker-mid="url(#tuft)" marker-end="url(#tuft)" points="90,35 140,50 115,93 178,90 228,28 315,22 372,45 422,35 432,85 478,72 532,37 585,53 640,24 697,25 720,90 670,85 620,95 558,97 527,147 492,117 424,142 378,118 314,128 330,82 276,87 226,76 265,157 221,135 157,140 90,143 45,178 35,70 165,198 230,188 308,193 368,175 420,190 487,180 560,185 600,140 662,130 708,160 690,200 605,200 650,238 575,245 522,230 465,225 418,250 350,227 308,257 258,255 205,237 132,243 80,232 22,225 100,292 38,280 45,335 138,322 220,297 322,302 373,282 430,305 480,290 542,295 612,282 665,300 715,322 582,325 635,345 545,340 490,350 432,360 384,377 355,337 270,320 198,348 242,365 100,367 48,390 150,382 208,408 282,418 100,427 155,433 43,445 88,475 140,490 198,467 252,460 315,465 370,488 328,522 276,528 220,520 168,532 112,535 33,510 48,555 155,580 210,570 85,585 263,598 318,562 365,575 420,583 430,525 475,510 485,560 445,410 487,447 540,427 595,435 650,410 705,375 725,420 690,465 582,495 525,480 660,570 705,605 615,560 740,535 595,385 490,400 42,620 108,625 162,638 227,628 315,615 372,632 415,632 485,620 560,630 660,622 720,640"/></g></pattern>
        </defs>
        <rect width="100%" height="100%" fill="#add19e"/>
        <rect width="100%" height="100%" fill="url(#wood)"/>
        <path d="M0 253L28 247 37 297 47 330H0z" fill="#cdebb0"/>
        <path class="way-case" d="M0 25L28 46 47 66 87 105 117 137 182 199 282 292 322 329"/>
        <path class="way" d="M0 25L28 46 47 66 87 105 117 137 182 199 282 292 322 329"/>
        <path d="M0 232L47 330" stroke="#0a5a14" stroke-width="3"/>
        <text class="nsg" transform="translate(19 269) rotate(62)">nsg_1983</text>
        <g class="pt"><circle cx="0" cy="88" r="3"/><circle cx="54" cy="89" r="3"/><circle cx="114" cy="137" r="3"/><circle class="hit" cx="182" cy="199" r="3"/></g>
        <g fill="#111"><circle cx="0" cy="88" r="1"/><circle cx="54" cy="89" r="1"/><circle cx="114" cy="137" r="1"/><circle cx="182" cy="199" r="1"/></g>
        <path d="M209 170L190 192" stroke="#e01010" stroke-width="1.500"/><path d="M186 196L189 187 191 190 195 192z" fill="#e01010"/>
      </svg>
      <div class="tag three">3.</div>
      <div class="tag bild">Bild 12</div>
    </div>
  </div>

  <footer class="status">
    <span class="find"><svg viewBox="0 0 8 8"><circle cx="4.500" cy="3.500" r="2.500"/><path d="M2.700 5.300L1 7"/></svg><input type="search" aria-label="Suche" placeholder="Zu suchender Typ (Strg+K)"></span>
    <label class="f1">Koordinate <input type="text" value="473671.0,5397404.0"></label><svg class="ic"><use href="#ext"/></svg>
    <label class="f2">Maßstab <select><option>1:675</option></select></label><svg class="ic"><use href="#lock"/></svg>
    <label class="f3">Vergrößerung <span class="spin"><input type="text" value="100%"><i></i></span></label>
    <label class="f3">Drehung <span class="spin"><input type="text" value="0,0 °"><i></i></span></label>
    <label class="f4"><input type="checkbox" checked>Zeichnen</label>
    <span class="epsg"><svg class="ic"><use href="#epsg"/></svg>EPSG:25832</span>
    <svg class="ic"><use href="#msg"/></svg><svg class="ic"><use href="#chat"/></svg>
  </footer>
  <div class="behind"></div>
</section>

<section class="win attr">
  <header class="title"><svg class="logo"><use href="#q"/></svg><h1>Funde_WT_2017_2019 :: Objekte gesamt:263, gefiltert: 263, gewähl...</h1><span class="ctl"><button aria-label="Tabelle minimieren"><svg viewBox="0 0 8 8"><path d="M1 4.500h6"/></svg></button></span></header>
  <div class="tbl-tools"><button class="on" aria-label="Bearbeiten"><svg><use href="#pen"/></svg></button><button aria-label="Mehrfachbearbeitung"><svg><use href="#pens"/></svg></button><button aria-label="Speichern"><svg><use href="#savee"/></svg></button><button aria-label="Neu laden"><svg><use href="#redo"/></svg></button><i class="sep"></i><button aria-label="Neues Objekt"><svg><use href="#nmap"/></svg></button><button aria-label="Löschen"><svg><use href="#del"/></svg></button><button aria-label="Ausschneiden"><svg><use href="#sci"/></svg></button><button aria-label="Kopieren"><svg><use href="#pages"/></svg></button><button aria-label="Einfügen"><svg><use href="#paste"/></svg></button><i class="sep"></i><button aria-label="Ausdruck"><svg><use href="#desel"/></svg></button><button aria-label="Alle wählen"><svg><use href="#ysq"/></svg></button><button aria-label="Umkehren"><svg><use href="#sel2"/></svg></button><button aria-label="Auswahl aufheben"><svg><use href="#desel"/></svg></button><button aria-label="Filtern"><svg><use href="#fil"/></svg></button><button aria-label="Nach oben"><svg><use href="#mesh"/></svg></button><button aria-label="Zur Zeile"><svg><use href="#star"/></svg></button><button aria-label="Zoomen"><svg><use href="#zsel"/></svg></button><i class="sep"></i><button aria-label="Neues Feld"><svg><use href="#nmap"/></svg></button><button aria-label="Feld löschen"><svg><use href="#znat"/></svg></button><button aria-label="Feldrechner"><svg><use href="#calc"/></svg></button><i class="sep"></i><button aria-label="Formatierung"><svg><use href="#txt"/></svg></button><i class="sep"></i><button aria-label="Andocken"><svg><use href="#tab"/></svg></button><button aria-label="Aktionen"><svg><use href="#act"/></svg></button></div>
  <form class="calcbar"><select aria-label="Feld"><option>abc id</option></select><span>=</span><button type="button" aria-label="Ausdruck">ε</button><select class="grow" aria-label="Wert"><option></option></select><button type="button" class="cmd">Alle aktualisieren</button><button type="button" class="cmd last">Gewä</button></form>
  <div class="grid">
    <table>
      <colgroup><col class="c0"><col class="c1"><col class="c2"><col class="c3"><col class="c4"></colgroup>
      <thead><tr><th></th><th class="sorted">wgs_84_dec</th><th>y_lat</th><th>x_lon</th><th>pfl_<br>ges</th></tr></thead>
      <tbody>
        <tr class="edited"><th>1</th><td>48.72850,8.64254</td><td>48,72854175041157</td><td>8,642666887682694</td><td>NULL</td></tr>
        <tr class="edited hi"><th></th><td>48.72850,8.64254</td><td>48,7285</td><td>8,64254</td><td>NULL</td></tr>
        <tr><th>3</th><td>48.72869,8.64222</td><td>48,72869</td><td>8,64222</td><td>NULL</td></tr>
        <tr><th>4</th><td>48.72869,8.64222</td><td>48,72869</td><td>8,64222</td><td>NULL</td></tr>
        <tr><th>5</th><td>48.72869,8.64222</td><td>48,72869</td><td>8,64222</td><td>NULL</td></tr>
        <tr><th>6</th><td>48.72884,8.64169</td><td>48,72884</td><td>8,64169</td><td>NULL</td></tr>
        <tr><th>7</th><td>48.72884,8.64194</td><td>48,72884</td><td>8,64194</td><td>NULL</td></tr>
        <tr><th>8</th><td>48.72884,8.64194</td><td>48,72884</td><td>8,64194</td><td>NULL</td></tr>
        <tr><th>9</th><td>48.728935,8.641590</td><td>48,728935</td><td>8,64159</td><td>NULL</td></tr>
        <tr><th>10</th><td>48.72914,8.65317</td><td>48,72914</td><td>8,65317</td><td>NULL</td></tr>
        <tr><th>11</th><td>48.72917,8.64141</td><td>48,72917</td><td>8,64141</td><td>NULL</td></tr>
        <tr><th>12</th><td>48.72927,8.64240</td><td>48,72927</td><td>8,6424</td><td>NULL</td></tr>
        <tr><th>13</th><td>48.72927,8.64240</td><td>48,72927</td><td>8,6424</td><td>NULL</td></tr>
        <tr><th>14</th><td>48.72927,8.64240</td><td>48,72927</td><td>8,6424</td><td>NULL</td></tr>
        <tr><th>15</th><td>48.72928,8.64283</td><td>48,72928</td><td>8,64283</td><td>NULL</td></tr>
        <tr><th>16</th><td>48.729288,8.641580</td><td>48,729288</td><td>8,64158</td><td>NULL</td></tr>
        <tr><th>17</th><td>48.729288,8.641580</td><td>48,729288</td><td>8,64158</td><td>NULL</td></tr>
        <tr><th>18</th><td>48.729288,8.641580</td><td>48,729288</td><td>8,64158</td><td>NULL</td></tr>
        <tr><th>19</th><td>48.72932,8.64190</td><td>48,72935008329269</td><td>8,641700101728889</td><td class="val">vps</td></tr>
        <tr><th>20</th><td>48.72937,8.64226</td><td>48,72929028698386</td><td>8,642297922929604</td><td>NULL</td></tr>
        <tr><th>21</th><td>48.72937,8.64226</td><td>48,7292902879436</td><td>8,642297922922795</td><td>NULL</td></tr>
        <tr><th>22</th><td>48.72938,8.64311</td><td>48,72938</td><td>8,64311</td><td>NULL</td></tr>
        <tr><th>23</th><td>48.72940,8.64233</td><td>48,72932615240957</td><td>8,642344569395767</td><td>NULL</td></tr>
      </tbody>
    </table>
  </div>
  <div class="hscroll"><i class="l"></i><b></b></div>
  <footer class="foot"><button><svg><use href="#fil"/></svg>Alle Objekte anzeigen<i class="dd"></i></button></footer>
</section>

<div class="mark"></div>
<div class="tooltip" role="tooltip"><b>Zu ausgewählten<br>Objekten zoomen</b><br>(Strg+J)</div>
<div class="tag two">2.</div>
<div class="tag one">1.</div>
</main>
</body>
</html>
```
FILE: styles.css
```css
* { box-sizing: border-box; }
html, body { height: 100%; }
body { margin: 0; overflow: hidden; font: 6px/10px "Open Sans", "Noto Sans", sans-serif; text-rendering: geometricPrecision; color: #111; background: #2a3350; }
button, input, select { font: inherit; color: inherit; margin: 0; padding: 0; border: 0; background: none; border-radius: 0; text-rendering: inherit; }
h1, h2, ul { margin: 0; padding: 0; font: inherit; list-style: none; }
a { color: inherit; text-decoration: none; }
i { font-style: normal; }
.defs { position: absolute; width: 0; height: 0; }

.desktop { position: relative; height: 100%; display: grid; grid-template-columns: 567fr 233fr; }
.win { min-width: 0; min-height: 0; display: flex; flex-direction: column; background: #f0f0f0; overflow: hidden; }
.qgis { border-left: 1px solid #9aa3aa; }
.attr { border-left: 2px solid #70757a; border-bottom: 1px solid #27365c; }

.title { display: flex; align-items: center; flex: none; height: 16px; padding: 0 4px; gap: 3px; background: #fff; border-top: 1px solid #4a4a5c; }
.title .logo { width: 8px; height: 8px; }
.title h1 { white-space: nowrap; }
.ctl { margin-left: auto; display: flex; gap: 16px; padding-right: 4px; }
.ctl button, .ctl svg { display: block; width: 8px; height: 8px; }
.ctl path { fill: none; stroke: #444; stroke-width: .8; }
.attr .title h1 { color: #999; }
.attr .ctl { padding-right: 10px; }

.menu { display: flex; flex: none; height: 11px; padding-left: 3px; gap: 6px; background: #fff; }

.bar { display: flex; align-items: center; flex: none; height: 14px; padding-left: 4px; border-bottom: 1px solid #e2e2e2; white-space: nowrap; overflow: hidden; }
.bar button, .side button { display: grid; place-items: center; flex: none; width: 13px; height: 12px; }
.bar svg, .side svg { width: 10px; height: 10px; }
.on { background: #cce4f7; }
.sep { flex: none; width: 6px; height: 10px; background: linear-gradient(#ccc, #ccc) center / 1px 100% no-repeat; }
.sep.thin { width: 3px; }
.sep.wide { width: 8px; }
.dd { flex: none; display: grid; place-items: center; width: 6px; height: 12px; }
.dd::before { content: ""; border: 2px solid transparent; border-top: 3px solid #111; border-bottom: 0; }
.dd.on { background-color: #cce4f7; }
.more { flex: none; width: 18px; text-align: right; padding-right: 2px; }

.work { display: flex; flex: 1; min-height: 0; }
.side { flex: none; width: 20px; height: 155px; padding: 5px 0 0 1px; display: flex; flex-direction: column; justify-content: space-between; }
.side button { position: relative; }
.more-dd::after { content: ""; position: absolute; right: -4px; top: 5px; border: 2px solid transparent; border-top: 3px solid #111; border-bottom: 0; }
.panel { flex: none; width: 106px; display: flex; flex-direction: column; border: 1px solid #c4c4c4; border-top: 0; margin-bottom: 1px; }
.panel header { display: flex; align-items: center; gap: 4px; height: 14px; padding: 0 2px; background: #dcdcdc; flex: none; }
.panel h2 { flex: 1; }
.panel header svg { display: block; width: 7px; height: 7px; }
.tools { display: flex; flex: none; align-items: center; height: 11px; }
.tools button { width: 10px; display: grid; place-items: center; }
.tools svg { width: 8px; height: 8px; }
.tree { flex: 1; min-height: 0; overflow: hidden; background: #fff; border-top: 1px solid #ccc; }
.tree li { display: flex; height: 10px; white-space: nowrap; }
.tree .sub { padding-left: 10px; }
.tree li > i { flex: none; width: 10px; height: 10px; display: grid; place-items: center; }
.tree i::before { width: 4px; height: 4px; border: solid #aaa; border-width: 0 1px 1px 0; }
.tree .c::before { content: ""; transform: rotate(-45deg); }
.tree .o::before { content: ""; border-color: #444; transform: rotate(45deg); }
.tree label { display: flex; align-items: center; gap: 2px; flex: 1; padding-left: 1px; }
.tree label svg { width: 9px; height: 9px; flex: none; }
.cur label { background: #e6e6e6; }
.cur span { font-weight: bold; text-decoration: underline; }
.b { font-weight: bold; }
.it span { font-style: italic; color: #555; }
input[type=checkbox] { appearance: none; flex: none; width: 7px; height: 7px; border: 1px solid #777; background: #fff; display: grid; place-items: center; }
input[type=checkbox]:checked::before { content: ""; width: 4px; height: 2px; border: solid #555; border-width: 0 0 1px 1px; transform: translateY(-1px) rotate(-45deg); }
.hscroll { display: flex; align-items: center; flex: none; height: 9px; padding: 0 3px; background: #f0f0f0; }
.hscroll b { width: 42%; height: 7px; margin-left: 3px; background: #cdcdcd; }
.hscroll i { width: 3px; height: 3px; border: solid #444; border-width: 1px 0 0 1px; transform: rotate(-45deg); }
.hscroll .r { margin-left: auto; transform: rotate(135deg); }

.map { position: relative; flex: 1; min-width: 0; margin-left: 1px; overflow: hidden; }
.canvas { display: block; width: 100%; height: 100%; }
.way-case { fill: none; stroke: #c8d0a4; stroke-width: 3; }
.way { fill: none; stroke: #e3b79d; stroke-width: 1.5; stroke-dasharray: 2 2; }
.nsg { font: 8px "Liberation Sans", sans-serif; fill: #222; }
.pt circle { fill: #fff; stroke: #333; stroke-width: 1; }
.pt .hit { fill: #ffd91f; stroke: #7a5a00; }

.tag { position: absolute; display: grid; place-items: center; width: 18px; height: 17px; border: 1px solid #333; background: #ff0; font: bold 7px/9px "Liberation Sans", sans-serif; color: #111; }
.one { left: 560px; top: 77px; }
.two { left: 177px; top: 67px; }
.three { left: 208px; top: 154px; }
.bild { left: 212px; top: 300px; width: 61px; height: 19px; font-size: 9px; }
.mark { position: absolute; left: 151px; top: 22px; width: 22px; height: 20px; border: 1px solid #d8141c; }
.tooltip { position: absolute; left: 160px; top: 41px; width: 57px; height: 27px; padding: 1px 0 0 2px; border: 1px solid #888; background: #fff; color: #555; line-height: 8px; white-space: nowrap; box-shadow: 1px 1px 1px #999; }

.status { display: flex; align-items: center; flex: none; height: 14px; padding: 0 10px 0 1px; gap: 3px; white-space: nowrap; border-top: 1px solid #ddd; }
.status input[type=text], .status input[type=search], .status select { height: 10px; border: 1px solid #bbb; background: #fff; padding: 0 2px; }
.find { position: relative; flex: none; width: 117px; margin-right: 12px; }
.find input { display: block; width: 100%; }
.status .find input { padding-left: 11px; }
.find input::placeholder { color: #888; }
.find svg { position: absolute; left: 3px; top: 1px; width: 7px; height: 7px; fill: none; stroke: #888; }
.status label { display: flex; align-items: center; gap: 1px; }
.f1 input { width: 60px; text-align: center; }
.status .f1 input { padding: 0; }
select { appearance: none; }
.status select, .calcbar select { background: #fff url("data:image/svg+xml,%3Csvg xmlns='http://www.w3.org/2000/svg' viewBox='0 0 6 6'%3E%3Cpath d='M1 2l2 2 2-2' fill='none' stroke='%23444' stroke-width='.8'/%3E%3C/svg%3E") right 2px center / 6px 6px no-repeat; }
.status .f2 select { width: 34px; line-height: 8px; }
.spin { position: relative; }
.spin input { display: block; width: 34px; }
.spin i { position: absolute; right: 2px; top: 2px; width: 4px; height: 7px; }
.spin i::before, .spin i::after { content: ""; position: absolute; left: 0; border: 2px solid transparent; }
.spin i::before { top: 0; border-top: 0; border-bottom: 2px solid #333; }
.spin i::after { bottom: 1px; border-bottom: 0; border-top: 2px solid #333; }
.ic { width: 8px; height: 8px; flex: none; }
.epsg { display: flex; align-items: center; gap: 2px; margin-left: auto; }
.behind { flex: none; height: 4px; border-bottom: 1px solid #1c2b49; border-top: 1px solid #8c979c; background: linear-gradient(90deg, #1584c8 2%, #2d5866 2% 38%, #a3c520 38% 61%, #7b3b8d 61% 63%, #d9782d 63% 65%, #3f8f9a 65% 86%, #b4bac0 86%); }

.tbl-tools { display: flex; align-items: center; flex: none; height: 12px; padding-left: 2px; overflow: hidden; }
.tbl-tools button { flex: none; display: grid; place-items: center; width: 9px; height: 10px; }
.tbl-tools svg { width: 8px; height: 8px; }
.tbl-tools .sep { width: 4px; }
.calcbar { display: flex; align-items: center; flex: none; height: 12px; gap: 3px; padding-left: 1px; overflow: hidden; white-space: nowrap; }
.calcbar select, .calcbar button { flex: none; height: 11px; border: 1px solid #bbb; padding: 0 2px; }
.calcbar select { width: 55px; background-color: #e9e9e9; }
.calcbar .grow { width: 82px; background-color: #fff; }
.calcbar button { background: #e4e4e4; width: 10px; }
.calcbar .cmd { width: auto; padding: 0 1px; }
.calcbar .last { flex: 1; text-align: left; border-right: 0; padding: 0; }
.grid { flex: 1; min-height: 0; overflow: hidden; background: #fff; }
table { width: 100%; height: calc(100% + 8px); border-collapse: collapse; table-layout: fixed; }
.c0 { width: 15px; } .c1 { width: 73px; } .c2 { width: 60px; } .c3 { width: 58px; }
th, td { padding: 0 1px; font-weight: normal; line-height: 7px; white-space: nowrap; overflow: hidden; }
thead tr { height: 21px; }
thead th { border-bottom: 1px solid #ddd; }
.sorted { background: url("data:image/svg+xml,%3Csvg xmlns='http://www.w3.org/2000/svg' viewBox='0 0 6 6'%3E%3Cpath d='M1 4l2-2 2 2' fill='none' stroke='%23666' stroke-width='.8'/%3E%3C/svg%3E") center top / 5px 4px no-repeat; }
tbody th { text-align: left; }
td { border: 1px solid #e6e6e6; text-align: right; }
td:nth-child(2) { text-align: left; }
td:nth-child(5) { text-align: left; font-style: italic; color: #999; }
td.val { font-style: normal; color: inherit; }
tbody tr:nth-child(even) td { background: #f3f3f3; }
tbody tr.hi td { background: #0078d7; color: #e8f4ff; border-color: #2b8fe0; }
.edited th { background: linear-gradient(#c8283c, #c8283c) right 2px center / 1px 100% no-repeat; }
.attr .hscroll b { width: 57px; flex: none; }
.foot { flex: none; height: 11px; }
.foot button { display: flex; align-items: center; gap: 1px; height: 10px; padding: 0 2px; background: #dcdcdc; border: 1px solid #c4c4c4; }
.foot svg { width: 7px; height: 7px; }
.foot .dd { width: 4px; }
```
